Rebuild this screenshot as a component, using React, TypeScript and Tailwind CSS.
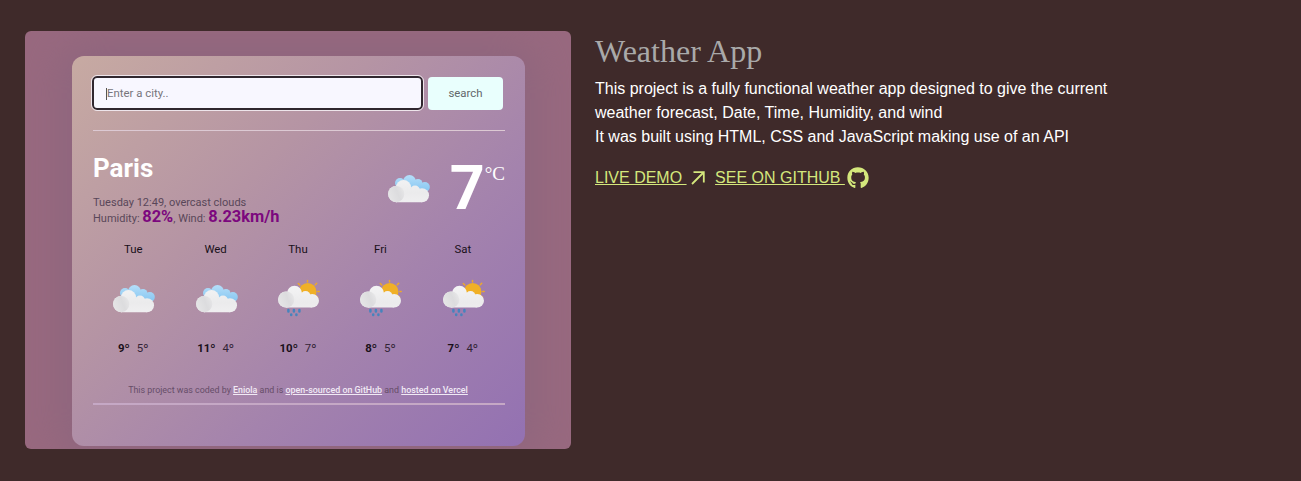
import { useId } from "react";
import { FaGithub } from "react-icons/fa";

type Kind = "clouds" | "rain";

const forecast: { day: string; kind: Kind; max: number; min: number }[] = [
  { day: "Tue", kind: "clouds", max: 9, min: 5 },
  { day: "Wed", kind: "clouds", max: 11, min: 4 },
  { day: "Thu", kind: "rain", max: 10, min: 7 },
  { day: "Fri", kind: "rain", max: 8, min: 5 },
  { day: "Sat", kind: "rain", max: 7, min: 4 },
];

function WeatherIcon({ kind }: { kind: Kind }) {
  const id = useId();
  const white = `w${id}`;
  const blue = `b${id}`;
  const shade = `s${id}`;
  return (
    <svg width="42" height="42" viewBox="0 0 42 42" className="block shrink-0">
      <defs>
        <linearGradient id={white} x1="0" y1="8" x2="0" y2="34" gradientUnits="userSpaceOnUse">
          <stop offset="0" stopColor="#f3f3f4" />
          <stop offset="0.6" stopColor="#ebebec" />
          <stop offset="1" stopColor="#f0eff1" />
        </linearGradient>
        <linearGradient id={blue} x1="0" y1="6" x2="0" y2="24" gradientUnits="userSpaceOnUse">
          <stop offset="0" stopColor="#b5dffa" />
          <stop offset="1" stopColor="#82c4f0" />
        </linearGradient>
        <linearGradient id={shade} x1="0" y1="0.7" x2="1" y2="0.3">
          <stop offset="0" stopColor="#e6e6e7" />
          <stop offset="0.6" stopColor="#dcdcde" />
          <stop offset="1" stopColor="#d8d8da" stopOpacity="0.25" />
        </linearGradient>
      </defs>
      {kind === "clouds" ? (
        <g>
          <g fill={`url(#${blue})`}>
            <circle cx="12" cy="14" r="5" />
            <circle cx="21.5" cy="12.5" r="6.5" />
            <circle cx="30" cy="14.5" r="4.5" />
            <circle cx="36.8" cy="18" r="5" />
            <rect x="15" y="14" width="22" height="9" />
          </g>
          <g fill={`url(#${white})`}>
            <circle cx="8.2" cy="25.1" r="8.1" />
            <circle cx="15.5" cy="18.5" r="7.6" />
            <circle cx="27" cy="21.5" r="5" />
            <circle cx="34" cy="26.2" r="7" />
            <path d="M8 20 H28 L34 26 V33.2 H8Z" />
          </g>
          <circle cx="8.2" cy="25.1" r="8.1" fill={`url(#${shade})`} />
        </g>
      ) : (
        <g>
          <g stroke="#eda82b" strokeWidth="1.5" strokeLinecap="round">
            <path d="M29.5 1.5V3M20.3 4.5L21.8 6M37.3 5.7L38.7 4.3M39.8 12.4H41.2M38 17L39.5 18" />
          </g>
          <circle cx="29.7" cy="12.7" r="8.8" fill="#f0b026" />
          <g fill={`url(#${white})`}>
            <circle cx="8.2" cy="20.5" r="8.1" />
            <circle cx="16.5" cy="14.3" r="7.5" />
            <circle cx="27.5" cy="17" r="5" />
            <circle cx="34.2" cy="21.8" r="6.8" />
            <path d="M8 18 H28 L34 22 V28.6 H8Z" />
          </g>
          <circle cx="8.2" cy="20.5" r="8.1" fill={`url(#${shade})`} />
          <g stroke="#4684bd" strokeWidth="2.5" strokeLinecap="round">
            <path d="M10.4 31V32.6M15.9 31V32.6M21.4 31V32.6M13.2 35.6V36M18.4 35.6V36" />
          </g>
        </g>
      )}
    </svg>
  );
}

function WeatherPreview() {
  return (
    <div className="flex h-[418px] w-[546px] shrink-0 justify-center overflow-hidden rounded-md bg-[#98697f] pt-[25px] pl-px">
      <div className="h-[390px] w-[453px] rounded-xl bg-[linear-gradient(135deg,#c7aaa2_0%,#b594a4_36%,#a483ad_66%,#9371b2_100%)] pt-5 pr-5 pl-[21px] font-['Roboto',sans-serif] shadow-[0_0_40px_12px_#8e667e]">
        <div className="-ml-px flex items-center gap-[5px]">
          <div className="flex h-[34px] w-[331px] items-center rounded-[5px] border-2 border-[#30272f] bg-[#f8f7ff] pt-px pl-3 text-[11.4px] text-[#77757b] outline outline-[#eee5eb]">
            <span className="h-3 w-px bg-[#555]" />
            Enter a city..
          </div>
          <div className="flex h-[33px] w-[75px] items-center justify-center rounded-[4px] bg-[#e9fffd] pt-px text-[11.4px] text-[#62686b]">
            search
          </div>
        </div>
        <div className="mt-5 h-px w-[412px] bg-[#dcc9d3]" />

        <div className="flex h-[98px] w-[412px] justify-between">
          <div className="pt-[22px]">
            <h3 className="text-[26px] leading-[30px] font-bold text-white">Paris</h3>
            <div className="mt-[13px] text-[11px] leading-[14px] whitespace-nowrap text-[#594759]">
              <p>Tuesday 12:49, overcast clouds</p>
              <p>
                Humidity: <strong className="text-[16.4px] font-bold text-[#7c087e]">82%</strong>, Wind:{" "}
                <strong className="text-[16.4px] font-bold text-[#7c087e]">8.23km/h</strong>
              </p>
            </div>
          </div>
          <div className="flex items-start">
            <div className="mr-[20px] pt-[38px]">
              <WeatherIcon kind="clouds" />
            </div>
            <span className="pt-[26px] text-[61px] leading-[62px] font-bold text-white">7</span>
            <span className="pt-[33px] font-['Liberation_Serif',serif] text-[19px] leading-[20px] text-white">
              °C
            </span>
          </div>
        </div>

        <div className="mt-[13px] -ml-px grid w-[412px] grid-cols-5 text-center text-[11.4px] leading-[14px] text-[#191019]">
          {forecast.map((f) => (
            <div key={f.day} className="flex flex-col items-center">
              <span>{f.day}</span>
              <div className="mt-[23px] ml-[2px]">
                <WeatherIcon kind={f.kind} />
              </div>
              <div className="mt-[20px] flex gap-[7px]">
                <strong className="font-bold">{f.max}º</strong>
                <span className="text-[#332436]">{f.min}º</span>
              </div>
            </div>
          ))}
        </div>

        <p className="mt-[29px] -ml-px w-[412px] text-center text-[8.9px] leading-[12px] whitespace-nowrap text-[#664d68]">
          This project was coded by <a className="font-medium text-[#f1eaf5] underline">Eniola</a> and is{" "}
          <a className="font-medium text-[#f1eaf5] underline">open-sourced on GitHub</a> and{" "}
          <a className="font-medium text-[#f1eaf5] underline">hosted on Vercel</a>
        </p>
        <div className="mt-[7px] h-[2px] w-[412px] bg-[#c5a8c5]" />
      </div>
    </div>
  );
}

export default function App() {
  return (
    <main className="flex h-[481px] items-start gap-6 overflow-hidden bg-[#3f2a2a] pt-[31px] pl-[25px] font-['Liberation_Sans',sans-serif]">
      <WeatherPreview />
      <section className="w-[540px]">
        <h2 className="pt-px font-['Liberation_Serif',serif] text-[32px] leading-[38px] text-[#a9a9a9]">
          Weather App
        </h2>
        <p className="mt-[7px] text-base leading-6 text-white">
          This project is a fully functional weather app designed to give the current weather forecast, Date,
          Time, Humidity, and wind
          <br />
          It was built using HTML, CSS and JavaScript making use of an API
        </p>
        <div className="mt-[16px] flex h-[25px] items-center text-base whitespace-pre text-[#d4e77c]">
          <a className="underline">LIVE DEMO </a>
          <svg width="14" height="14" viewBox="0 0 14 14" className="mr-[10px] ml-[4.5px]" fill="none" stroke="currentColor" strokeWidth="1.8">
            <path d="M1 13L12.5 1.5M2.5 1.2H12.8V11.5" />
          </svg>
          <a className="underline">SEE ON GITHUB </a>
          <FaGithub className="ml-[2px] size-[22px]" />
        </div>
      </section>
    </main>
  );
}
